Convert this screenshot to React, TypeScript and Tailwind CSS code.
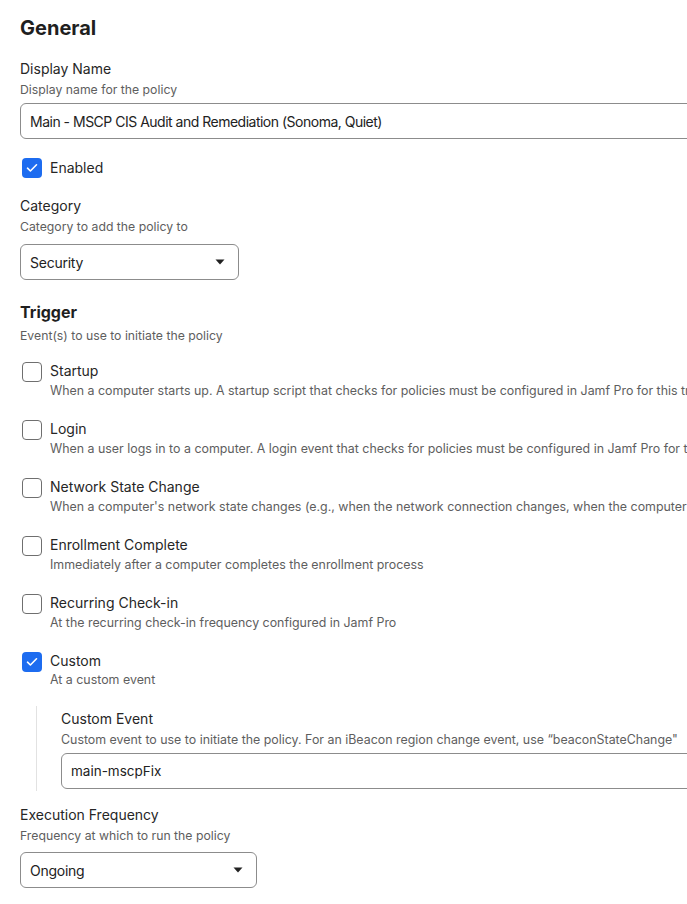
import React from 'react'

const font = { fontFamily: 'Inter, "Noto Sans", sans-serif' }

function Check({ checked }: { checked?: boolean }) {
  if (checked) {
    return (
      <span className="flex h-[20px] w-[20px] shrink-0 items-center justify-center rounded-[4px] bg-[#1d6cf0]">
        <svg width="12" height="10" viewBox="0 0 12 10" fill="none">
          <path d="M1.5 5.2 4.4 8 10.5 1.8" stroke="white" strokeWidth="1.6" strokeLinecap="round" strokeLinejoin="round" />
        </svg>
      </span>
    )
  }
  return <span className="h-[20px] w-[20px] shrink-0 rounded-[4px] border border-[#6f6f6f] bg-white" />
}

function Caret() {
  return (
    <svg width="10" height="6" viewBox="0 0 10 6">
      <path d="M0.5 0.5h9L5 5.5z" fill="#222" />
    </svg>
  )
}

const triggers = [
  {
    label: 'Startup',
    desc: 'When a computer starts up. A startup script that checks for policies must be configured in Jamf Pro for this trigger to work',
  },
  {
    label: 'Login',
    desc: 'When a user logs in to a computer. A login event that checks for policies must be configured in Jamf Pro for this trigger to work',
  },
  {
    label: 'Network State Change',
    desc: "When a computer's network state changes (e.g., when the network connection changes, when the computer name changes, when the IP address changes)",
  },
  { label: 'Enrollment Complete', desc: 'Immediately after a computer completes the enrollment process' },
  { label: 'Recurring Check-in', desc: 'At the recurring check-in frequency configured in Jamf Pro' },
]

const sub = 'text-[12.25px] leading-[16px] text-[#5e5e5e]'
const desc = 'text-[12.4px] leading-[16px] text-[#5e5e5e]'

export default function App() {
  return (
    <div className="h-[904px] w-[687px] overflow-hidden bg-white" style={font}>
      <div className="w-[1100px] px-5 pt-[14px]">
        <h1 className="text-[20px] font-bold leading-[28px] text-[#1f1f1f]">General</h1>

        {/* Display name */}
        <div className="mt-[17px] text-[14px] leading-[20px] text-[#262626]">Display Name</div>
        <div className={`mt-[3px] ${sub}`}>Display name for the policy</div>
        <div className="mt-[5px] flex h-[36px] items-center rounded-[6px] border border-[#8c8c8c] px-[9px] text-[14px] tracking-[-0.5px] text-[#222]">
          Main - MSCP CIS Audit and Remediation (Sonoma, Quiet)
        </div>

        <label className="mt-[19px] flex items-center gap-[8px] pl-[2px]">
          <Check checked />
          <span className="text-[14px] leading-[20px] text-[#262626]">Enabled</span>
        </label>

        {/* Category */}
        <div className="mt-[18px] text-[14px] leading-[20px] text-[#262626]">Category</div>
        <div className={`mt-[3px] ${sub}`}>Category to add the policy to</div>
        <div className="mt-[9px] flex h-[36px] w-[219px] items-center justify-between rounded-[6px] border border-[#8c8c8c] pl-[9px] pr-[13px] text-[14px] tracking-[-0.25px] text-[#222]">
          <span>Security</span>
          <Caret />
        </div>

        {/* Trigger */}
        <h2 className="mt-[21px] text-[16px] font-bold leading-[22px] text-[#1f1f1f]">Trigger</h2>
        <div className={`mt-[5px] ${sub}`}>Event(s) to use to initiate the policy</div>

        <div className="mt-[18px] flex flex-col gap-[21px]">
          {triggers.map((t) => (
            <div key={t.label} className="flex items-start gap-[8px] pl-[2px]">
              <Check />
              <div className="-mt-px">
                <div className="text-[14px] leading-[20px] text-[#262626]">{t.label}</div>
                <div className={`mt-[2px] whitespace-nowrap ${desc}`}>{t.desc}</div>
              </div>
            </div>
          ))}
          <div className="flex items-start gap-[8px] pl-[2px]">
            <Check checked />
            <div className="-mt-px">
              <div className="text-[14px] leading-[20px] text-[#262626]">Custom</div>
              <div className={`mt-[1px] ${desc}`}>At a custom event</div>
            </div>
          </div>
        </div>

        {/* Custom event */}
        <div className="ml-[16px] mt-[18px] border-l border-[#e2e2e2] pb-[2px] pl-[24px] pt-[3px]">
          <div className="text-[14px] leading-[20px] text-[#262626]">Custom Event</div>
          <div className={`mt-[3px] whitespace-nowrap ${desc}`}>
            Custom event to use to initiate the policy. For an iBeacon region change event, use “beaconStateChange"
          </div>
          <div className="mt-[5px] flex h-[36px] items-center rounded-[6px] border border-[#8c8c8c] px-[9px] text-[13.5px] text-[#222]">
            main-mscpFix
          </div>
        </div>

        {/* Execution frequency */}
        <div className="mt-[14px] text-[14px] leading-[20px] text-[#262626]">Execution Frequency</div>
        <div className={`mt-[3px] ${sub}`}>Frequency at which to run the policy</div>
        <div className="mt-[8px] flex h-[36px] w-[237px] items-center justify-between rounded-[6px] border border-[#8c8c8c] pl-[9px] pr-[13px] text-[14px] tracking-[-0.25px] text-[#222]">
          <span>Ongoing</span>
          <Caret />
        </div>
      </div>
    </div>
  )
}
